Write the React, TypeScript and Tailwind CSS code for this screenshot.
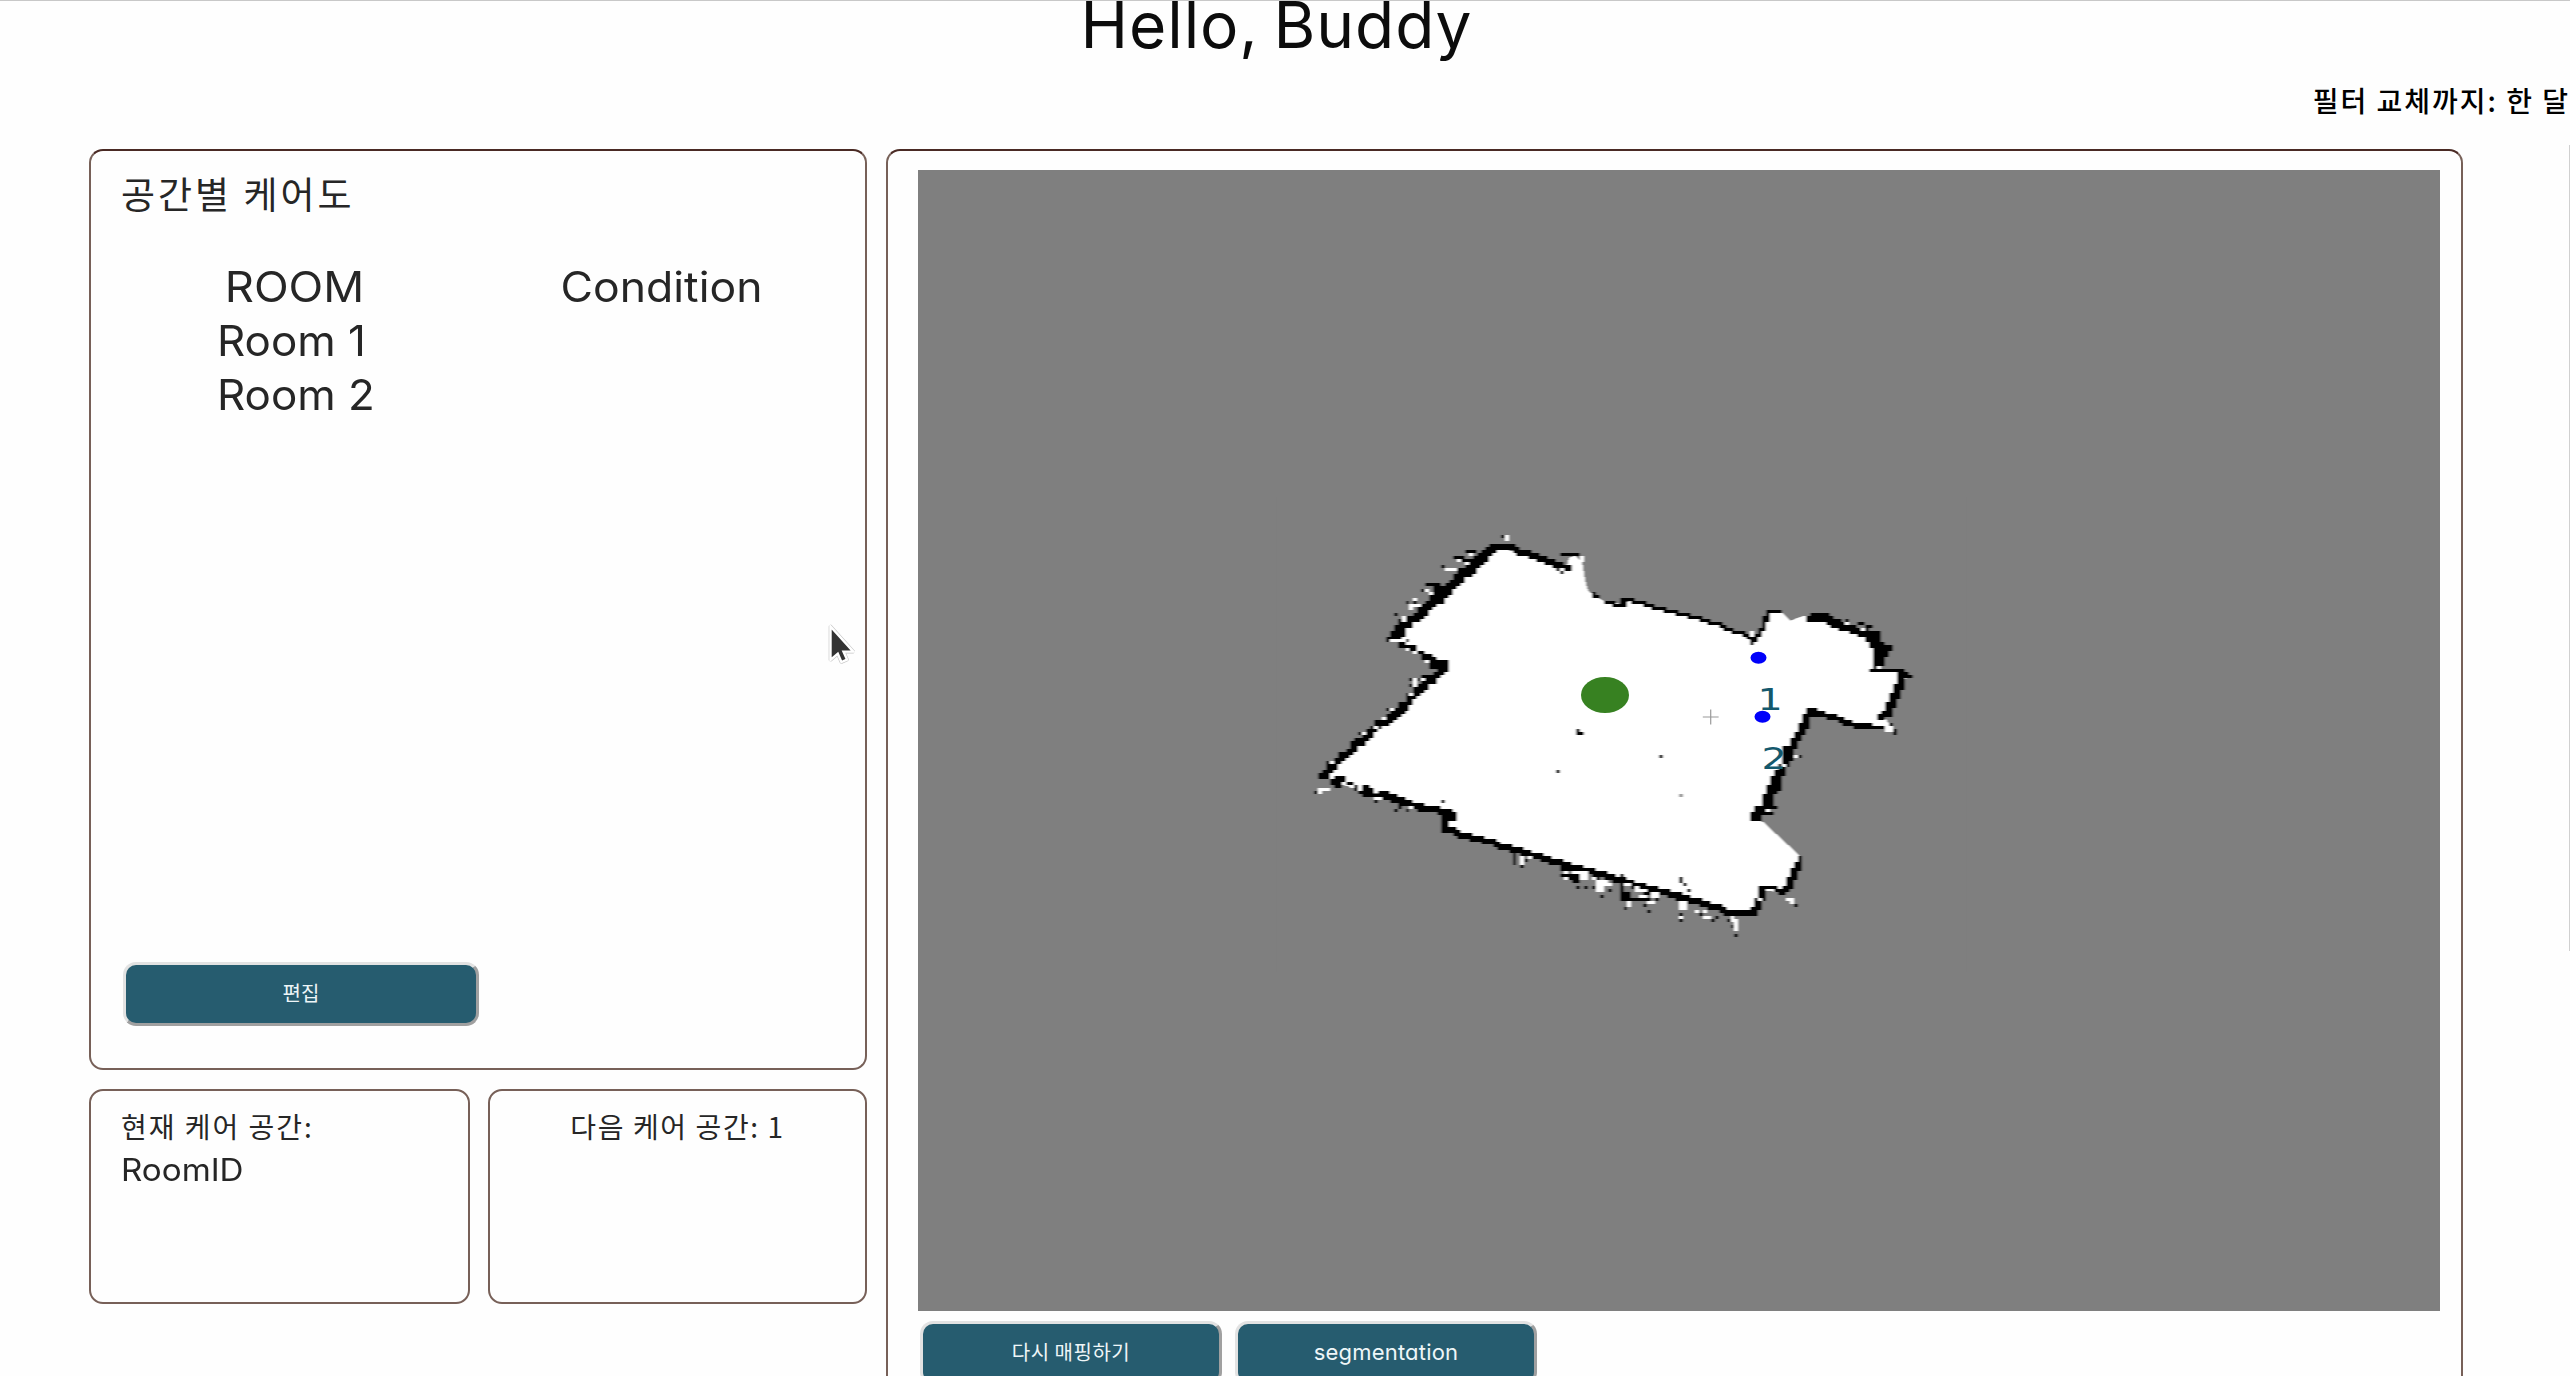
import type { ReactNode } from "react";

type Point = [number, number];

/* The floor plan is an occupancy grid of 384 x 384 cells stretched to 1522 x 1141 px. */
const CELLS = 384;
const MAP_W = 1522;
const MAP_H = 1141;
const cx = (x: number) => (x * CELLS) / MAP_W;
const cy = (y: number) => (y * CELLS) / MAP_H;

const FLOOR: Point[] = [
  [582, 378], [615, 387], [635, 392], [649, 396], [651, 388], [657, 386], [664, 392], [667, 410],
  [670, 421], [679, 427], [687, 432], [704, 434], [715, 430], [739, 437], [765, 444], [792, 452],
  [825, 464], [835, 473], [842, 463], [847, 452], [852, 442], [864, 443], [872, 451], [885, 446],
  [894, 446], [909, 449], [929, 458], [949, 463], [960, 465], [959, 473], [969, 478], [962, 488],
  [960, 499], [975, 500], [989, 507], [984, 515], [977, 527], [972, 538], [966, 546], [972, 556],
  [962, 558], [945, 557], [915, 546], [892, 541], [884, 557], [875, 573], [869, 587], [860, 607],
  [854, 617], [849, 630], [842, 640], [836, 649], [845, 652], [858, 664], [870, 675], [883, 687],
  [879, 697], [872, 712], [865, 723], [845, 720], [837, 742], [815, 742], [792, 735], [749, 723],
  [715, 713], [682, 703], [652, 696], [625, 688], [599, 679], [562, 670], [529, 660], [527, 650],
  [537, 646], [524, 640], [502, 637], [469, 624], [449, 622], [419, 613], [407, 607], [419, 593],
  [439, 573], [459, 557], [482, 537], [505, 518], [529, 497], [502, 483], [475, 470], [492, 450],
  [512, 433], [545, 403], [562, 388],
];

/* Each wall: brush width, brush height (in cells), then its corner points. */
const WALLS: [number, number, Point[]][] = [
  [3, 2, [[475, 469], [482, 458], [494, 450], [513, 434], [526, 421], [546, 404], [563, 389], [578, 378]]],
  [4, 3, [[518, 428], [526, 420]]],
  [3, 3, [[545, 404], [560, 391]]],
  [2, 3, [[478, 466], [483, 454]]],
  [2, 2, [[575, 377], [593, 378], [615, 386], [637, 395], [650, 399]]],
  [3, 1, [[650, 385], [657, 385]]],
  [1, 1, [[675, 423], [680, 427]]],
  [2, 1, [[690, 433], [704, 435], [707, 430], [715, 430], [739, 438], [765, 444], [792, 452], [810, 458], [830, 466]]],
  [1, 2, [[832, 466], [835, 473]]],
  [1, 2, [[835, 472], [842, 463], [847, 452], [851, 443]]],
  [2, 1, [[851, 442], [862, 442]]],
  [2, 2, [[892, 449], [896, 446], [910, 450], [929, 457], [949, 463]]],
  [3, 2, [[904, 447], [916, 453], [940, 461], [958, 467]]],
  [3, 3, [[954, 467], [959, 473]]],
  [2, 2, [[961, 464], [960, 474], [970, 479], [964, 487], [961, 497]]],
  [2, 3, [[959, 481], [960, 494]]],
  [2, 1, [[954, 501], [970, 500], [980, 501], [989, 507]]],
  [2, 3, [[983, 505], [984, 514], [979, 521], [976, 530], [971, 538]]],
  [2, 2, [[964, 546], [970, 544]]],
  [2, 1, [[970, 556], [962, 558], [945, 557], [930, 552], [915, 546], [892, 541]]],
  [1, 2, [[955, 557], [940, 556], [920, 549], [896, 542]]],
  [2, 2, [[892, 542], [885, 557], [878, 569], [870, 587], [863, 602], [856, 617], [850, 630], [843, 640], [837, 649]]],
  [3, 3, [[871, 580], [871, 588]]],
  [3, 2, [[858, 610], [855, 619]]],
  [3, 3, [[849, 628], [852, 634]]],
  [3, 2, [[843, 640], [838, 648]]],
  [1, 2, [[882, 688], [879, 697]]],
  [2, 2, [[880, 697], [875, 706], [872, 716], [865, 722]]],
  [2, 1, [[864, 723], [857, 719], [845, 719]]],
  [2, 2, [[844, 722], [840, 735], [836, 743], [813, 743], [793, 736], [773, 730], [749, 723], [715, 714], [695, 708], [682, 704], [652, 696], [625, 689], [599, 680], [562, 670], [530, 660]]],
  [2, 2, [[527, 659], [527, 650], [537, 646], [526, 641], [514, 639], [502, 637], [482, 631], [469, 625]]],
  [3, 2, [[526, 642], [533, 645]]],
  [2, 1, [[483, 633], [502, 639]]],
  [2, 2, [[465, 625], [480, 630]]],
  [1, 1, [[440, 620], [456, 626]]],
  [2, 3, [[447, 620], [450, 623]]],
  [2, 1, [[411, 607], [423, 608], [432, 615], [446, 622]]],
  [2, 2, [[416, 613], [421, 615]]],
  [2, 2, [[405, 606], [411, 601], [420, 591], [429, 584], [440, 573], [460, 557], [483, 537], [493, 529], [506, 518], [517, 507], [528, 497]]],
  [3, 2, [[438, 574], [442, 570]]],
  [3, 2, [[470, 550], [487, 535]]],
  [3, 3, [[519, 496], [527, 496]]],
  [2, 2, [[499, 522], [508, 513]]],
  [1, 1, [[504, 508], [517, 505]]],
  [2, 1, [[482, 475], [494, 477], [503, 484], [516, 489], [527, 494]]],
  [1, 2, [[505, 488], [513, 493]]],
  [2, 2, [[457, 559], [461, 553]]],
  [1, 2, [[597, 682], [597, 692]]],
  [2, 2, [[646, 698], [656, 700], [658, 709]]],
  [2, 1, [[651, 707], [664, 710]]],
  [1, 2, [[680, 703], [680, 710]]],
  [1, 3, [[704, 710], [705, 724]]],
  [3, 1, [[707, 724], [709, 730]]],
  [3, 1, [[709, 728], [718, 728]]],
];

/* Stray laser hits: x, y and optional size in cells. */
type Speck = [number, number, number?, number?];

const WHITE_SPECKS: Speck[] = [
  [589, 369, 1, 2], [545, 392, 3, 1], [552, 385, 1, 1], [549, 395], [534, 401, 2, 1], [529, 399],
  [508, 421, 2, 1], [512, 424], [497, 434, 3, 1], [495, 437], [497, 429], [484, 446], [487, 449, 1, 2],
  [484, 464], [478, 471, 3, 1], [486, 468], [490, 481], [497, 484], [509, 492],
  [497, 510, 1, 2], [506, 510], [497, 516], [492, 524], [474, 539], [467, 548], [459, 556], [446, 563],
  [414, 593], [404, 623], [406, 620, 3, 1], [414, 607, 1, 2], [427, 614], [435, 617], [442, 620],
  [460, 629, 2, 1], [494, 638], [644, 401], [664, 390, 1, 2],
  [604, 688], [605, 692, 1, 2], [611, 688], [647, 702], [647, 708], [659, 702, 2, 1], [667, 707, 2, 3],
  [669, 702], [674, 710, 1, 1], [685, 712, 3, 2], [683, 720, 2, 2], [692, 716], [711, 716, 2, 1],
  [718, 719, 1, 2], [711, 734, 1, 2], [727, 721, 2, 1], [726, 727, 2, 1], [736, 726, 2, 2], [732, 733, 2, 1],
  [763, 736, 2, 3], [764, 747], [787, 740], [790, 746, 2, 1], [780, 741], [814, 750, 1, 2],
  [818, 754, 1, 4], [870, 728], [874, 731, 1, 2], [841, 728, 1, 1],
  [930, 452], [949, 457, 1, 1], [944, 460], [962, 498], [972, 504], [879, 587], [852, 641], [867, 597],
  [970, 558, 2, 1], [973, 561, 2, 1], [834, 463, 1, 2],
];

const BLACK_SPECKS: Speck[] = [
  [585, 367], [547, 383], [554, 382, 2, 1], [540, 388, 3, 1], [547, 390, 2, 1], [526, 397], [507, 421],
  [511, 415, 2, 1], [518, 417, 2, 3], [490, 433], [497, 431], [478, 444], [487, 465], [490, 472],
  [494, 511], [502, 511], [494, 516], [489, 524], [469, 539], [442, 563], [410, 593], [398, 623],
  [525, 632], [458, 632], [479, 641], [483, 638], [490, 641], [605, 697], [610, 691], [644, 707],
  [644, 699], [654, 713], [660, 717], [669, 717], [676, 717], [684, 727], [690, 720], [709, 738],
  [729, 724, 2, 1], [729, 730, 2, 1], [727, 736], [732, 741], [740, 728], [763, 710, 1, 2], [767, 715],
  [770, 722], [764, 743], [764, 751], [784, 743], [797, 747], [793, 749], [810, 750], [814, 757],
  [819, 766], [878, 736], [929, 450], [942, 453, 2, 1], [953, 457, 2, 1], [882, 587], [978, 561, 1, 2],
  [974, 554], [858, 638, 2, 1], [853, 644, 2, 1], [861, 619], [954, 501, 2, 1], [866, 600, 2, 1],
  [660, 561, 1, 2], [664, 563], [640, 602], [743, 587], [643, 402],
];

const cell = (x: number, y: number, w = 1, h = 1) => `M${x} ${y}h${w}v${h}h${-w}z`;

function wallPath() {
  const filled = new Set<number>();
  for (const [bw, bh, points] of WALLS) {
    for (let i = 1; i < points.length; i++) {
      const [x0, y0] = [cx(points[i - 1][0]), cy(points[i - 1][1])];
      const [x1, y1] = [cx(points[i][0]), cy(points[i][1])];
      const steps = Math.max(1, Math.ceil(Math.max(Math.abs(x1 - x0), Math.abs(y1 - y0))));
      for (let s = 0; s <= steps; s++) {
        const px = Math.round(x0 + ((x1 - x0) * s) / steps - bw / 2);
        const py = Math.round(y0 + ((y1 - y0) * s) / steps - bh / 2);
        for (let a = 0; a < bw; a++) for (let b = 0; b < bh; b++) filled.add((py + b) * CELLS + px + a);
      }
    }
  }
  return [...filled].map((k) => cell(k % CELLS, Math.floor(k / CELLS))).join("");
}

const speckPath = (specks: Speck[]) =>
  specks.map(([x, y, w = 1, h = 1]) => cell(Math.round(cx(x) - w / 2), Math.round(cy(y) - h / 2), w, h)).join("");

const FLOOR_POINTS = FLOOR.map(([x, y]) => `${cx(x).toFixed(2)},${cy(y).toFixed(2)}`).join(" ");
const WALL_D = wallPath();
const WHITE_D = speckPath(WHITE_SPECKS);
const BLACK_D = speckPath(BLACK_SPECKS);

function FloorMap() {
  return (
    <svg
      className="block h-[1141px] w-[1522px] shrink-0 bg-[#7f7f7f]"
      viewBox="0 0 384 384"
      preserveAspectRatio="none"
    >
      <filter id="smooth" x="0" y="0" width="1" height="1">
        <feGaussianBlur stdDeviation="0.26" />
      </filter>
      <g shapeRendering="crispEdges" filter="url(#smooth)">
        <rect x="90" y="110" width="175" height="160" fill="#7f7f7f" />
        <polygon points={FLOOR_POINTS} fill="#fff" />
        <path d={WALL_D} fill="#000" />
        <path d={WHITE_D} fill="#fff" />
        <path d={BLACK_D} fill="#000" />
        <rect x="192" y="210" width="1" height="1" fill="#999" />
      </g>
      <path d="M200 181.6v5M198 184.1h4" stroke="#999" strokeWidth="0.3" fill="none" />
      <ellipse cx={cx(687)} cy={cy(525)} rx={cx(24)} ry={cy(18)} fill="#378121" />
      <ellipse cx={cx(840.5)} cy={cy(487.7)} rx={cx(8)} ry={cy(6)} fill="#0000fa" />
      <ellipse cx={cx(844.5)} cy={cy(546.7)} rx={cx(8)} ry={cy(6)} fill="#0000fa" />
      <g className="font-['DejaVu_Sans',sans-serif] text-[10px]" fill="#14586c">
        <text x="211.8" y="181.7">1</text>
        <text x="212.8" y="201.5">2</text>
      </g>
    </svg>
  );
}

function Card({ className, children }: { className: string; children: ReactNode }) {
  return (
    <section className={`rounded-[14px] border-2 border-[#776058] ${className}`}>{children}</section>
  );
}

function Button({ className, children }: { className: string; children: ReactNode }) {
  return (
    <button
      className={`h-16 shrink-0 rounded-[13px] border-[3px] border-t-[#e2e2e2] border-r-[#a0a0a0] border-b-[#a0a0a0] border-l-[#e2e2e2] bg-[#265c6f] pb-[3px] text-center leading-none text-[#eef6f8] ${className}`}
    >
      {children}
    </button>
  );
}

function Pointer() {
  return (
    <svg className="absolute top-[623px] left-[828px] h-[41px] w-[28px]" viewBox="0 0 28 41">
      <path
        d="M2.500 2.500V36l7.300-6.300 3.600 8.300 5.600-2.400-3.500-8h9.800z"
        fill="#333"
        stroke="#c4c4c4"
        strokeWidth="3.600"
        strokeLinejoin="round"
      />
      <path d="M2.500 2.500V36l7.300-6.300 3.600 8.300 5.600-2.400-3.500-8h9.800z" fill="#333" stroke="#fff" strokeWidth="2.400" />
    </svg>
  );
}

const ROOMS = ["Room 1", "Room 2"];

export default function App() {
  return (
    <div className="relative flex h-[1376px] w-[2570px] flex-col overflow-hidden border-t border-[#c8c8c8] bg-[#fefefe] font-['Noto_Sans_CJK_KR',sans-serif] text-[#262626]">
      <h1 className="shrink-0 pr-[17px] text-center font-['Inter',sans-serif] text-[64px] leading-[48px] tracking-[0.900px] text-[#0c0c0c] [word-spacing:-4px]">
        Hello, Buddy
      </h1>
      <p className="mt-[29px] shrink-0 text-right text-[28px] leading-[44px] font-medium tracking-[2px] text-black">
        필터 교체까지: 한 달
      </p>

      <main className="mt-[27px] flex items-start pl-[89px]">
        <div className="flex w-[778px] flex-col gap-[19px]">
          <Card className="flex h-[921px] flex-col border-t-[#4a2a24] px-[30px] pt-[15px]">
            <h2 className="text-[37px] leading-[54px] tracking-[3px]">공간별 케어도</h2>
            <div className="-mx-[10px] mt-10 font-['Inter',sans-serif] text-[42px] leading-[54px]">
              <div className="grid grid-cols-2 text-center">
                <div className="scale-x-[1.080]">ROOM</div>
                <div className="scale-x-[1.060]">Condition</div>
              </div>
              {ROOMS.map((room) => (
                <div key={room} className="grid grid-cols-2 pl-[106px]">
                  <div className="origin-left scale-x-[1.045]">{room}</div>
                </div>
              ))}
            </div>
            <Button className="mt-auto mb-[42px] ml-[2px] w-[356px] text-[20px] tracking-normal">편집</Button>
          </Card>
          <div className="flex justify-between">
            <Card className="h-[215px] w-[381px] px-[30px] pt-[14px] text-[28px] leading-[43px] tracking-[2px]">
              <p>현재 케어 공간:</p>
              <p className="origin-left scale-x-[1.070] font-['Inter',sans-serif] text-[31px] tracking-normal">RoomID</p>
            </Card>
            <Card className="h-[215px] w-[379px] pt-[14px] text-center text-[28px] leading-[43px] tracking-[1.600px]">
              <p>다음 케어 공간: 1</p>
            </Card>
          </div>
        </div>

        <Card className="ml-[19px] flex h-[1320px] w-[1577px] flex-col border-t-[#4a2a24] pt-[19px] pl-[30px]">
          <FloorMap />
          <div className="mt-[10px] ml-[2px] flex gap-[13px]">
            <Button className="w-[302px] text-[20px] tracking-[0.500px]">다시 매핑하기</Button>
            <Button className="w-[302px] font-['Inter',sans-serif] text-[22px] tracking-[0.200px] [font-feature-settings:'cv11']">
              segmentation
            </Button>
          </div>
        </Card>

        <div className="-mt-1 ml-auto h-[806px] w-px bg-[#d0d0d0]" />
      </main>

      <Pointer />
    </div>
  );
}
